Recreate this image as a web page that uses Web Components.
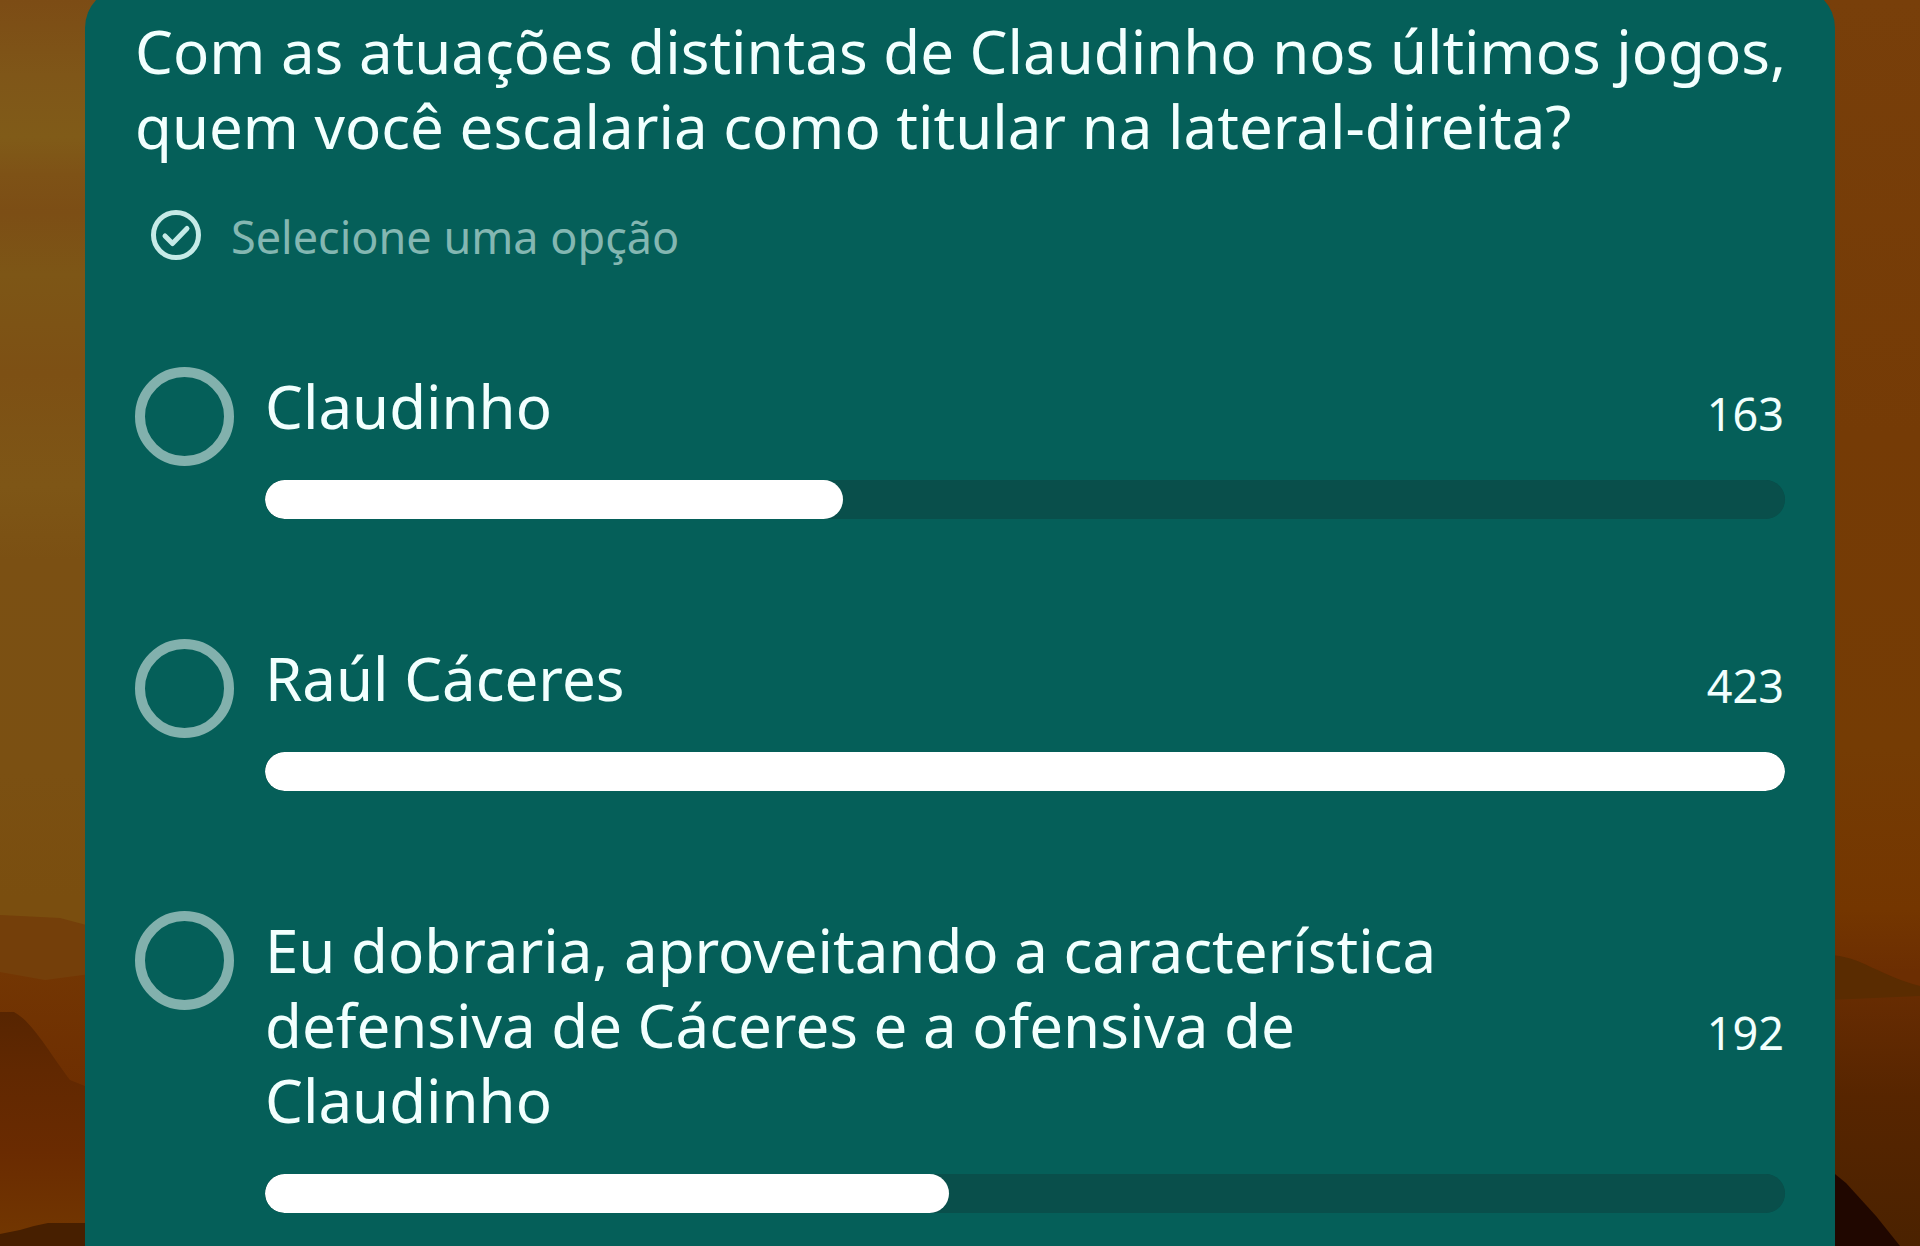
<!DOCTYPE html>
<html lang="pt-BR">
<head>
<meta charset="utf-8">
<meta name="viewport" content="width=device-width, initial-scale=1">
<title>Enquete</title>
<style>
  body { margin: 0; background: #7b4f14; font-family: "Noto Sans", "Open Sans", sans-serif; color: #f2fffe; }
</style>
</head>
<body>
<poll-stage>
  <sunset-scene slot="scene"></sunset-scene>
  <poll-card>
    <span slot="question">Com as atuações distintas de Claudinho nos últimos jogos,<br>quem você escalaria como titular na lateral-direita?</span>
    <poll-hint slot="hint">Selecione uma opção</poll-hint>
    <poll-option votes="163" share="38">Claudinho</poll-option>
    <poll-option votes="423" share="100">Raúl Cáceres</poll-option>
    <poll-option votes="192" share="45">Eu dobraria, aproveitando a característica<br>defensiva de Cáceres e a ofensiva de<br>Claudinho</poll-option>
  </poll-card>
</poll-stage>

<template id="stage-tpl">
  <style>
    :host { display: grid; grid-template: minmax(100vh, auto) / minmax(0, 1fr); overflow: hidden; }
    .scene, .content { grid-area: 1 / 1; display: grid; }
    .content { padding: 0 85px; margin-top: -13px; }
  </style>
  <div class="scene"><slot name="scene"></slot></div>
  <main class="content"><slot></slot></main>
</template>

<template id="scene-tpl">
  <style>
    :host { display: grid; contain: size; }
    svg { width: 100%; height: 100%; display: block; }
  </style>
  <svg viewBox="0 0 1920 1246" preserveAspectRatio="none" aria-hidden="true">
    <defs>
      <linearGradient id="l" x2="0" y2="1">
        <stop offset="0" stop-color="#7c4c15"/><stop offset=".06" stop-color="#7f5618"/>
        <stop offset=".11" stop-color="#805b18"/><stop offset=".14" stop-color="#7e5216"/>
        <stop offset=".17" stop-color="#7c4e15"/><stop offset=".22" stop-color="#7d5616"/>
        <stop offset=".3" stop-color="#7d5014"/><stop offset=".39" stop-color="#7e5616"/>
        <stop offset=".45" stop-color="#7b5013"/><stop offset=".62" stop-color="#7b5012"/>
        <stop offset=".72" stop-color="#7a4e0f"/>
      </linearGradient>
      <linearGradient id="r" x2="0" y2="1">
        <stop offset="0" stop-color="#783f0a"/><stop offset=".35" stop-color="#753b06"/>
        <stop offset=".6" stop-color="#753c04"/><stop offset=".73" stop-color="#743600"/>
        <stop offset=".78" stop-color="#6c2e02"/>
      </linearGradient>
      <linearGradient id="lh" x2="0" y2="1">
        <stop offset="0" stop-color="#733603"/><stop offset=".5" stop-color="#6d2d01"/><stop offset="1" stop-color="#763a02"/>
      </linearGradient>
      <linearGradient id="hill" x2="0" y2="1">
        <stop offset="0" stop-color="#572501"/><stop offset=".25" stop-color="#612801"/>
        <stop offset=".6" stop-color="#6a2b01"/><stop offset="1" stop-color="#733801"/>
      </linearGradient>
      <linearGradient id="rh" x2="0" y2="1">
        <stop offset="0" stop-color="#672c02"/><stop offset=".4" stop-color="#572500"/><stop offset="1" stop-color="#4b2200"/>
      </linearGradient>
    </defs>
    <rect width="960" height="1246" fill="url(#l)"/>
    <rect x="960" width="960" height="1246" fill="url(#r)"/>
    <path d="M0 915 L60 918 L90 926 V1246 H0Z" fill="#743f0a"/>
    <path d="M0 972 L45 980 L90 974 V1246 H0Z" fill="url(#lh)"/>
    <path d="M0 1012 L14 1012 C32 1022 45 1046 70 1080 L90 1088 V1246 H0Z" fill="url(#hill)"/>
    <path d="M0 1234 L20 1230 L34 1226 L48 1223 H90 V1246 H0Z" fill="#471f00"/>
    <path d="M1830 955 C1860 956 1880 976 1920 986 V1246 H1830Z" fill="#5a2c01"/>
    <path d="M1830 1000 L1920 996 V1246 H1830Z" fill="url(#rh)"/>
    <path d="M1830 1170 L1846 1183 L1876 1216 L1900 1246 H1830Z" fill="#200700"/>
  </svg>
</template>

<template id="card-tpl">
  <style>
    :host { display: flex; flex-direction: column; background: #055f59; border-radius: 41px 41px 0 0; padding: 27px 30px 32px 50px; }
    h1 { margin: 0 0 41px; font-size: 60px; line-height: 75px; font-weight: 400; }
    fieldset { border: 0; margin: 102px 20px 0 0; padding: 0; min-width: 0; display: flex; flex-direction: column; gap: 120px; }
  </style>
  <h1 id="q"><slot name="question"></slot></h1>
  <slot name="hint"></slot>
  <fieldset aria-labelledby="q"><slot></slot></fieldset>
</template>

<template id="hint-tpl">
  <style>
    :host { display: flex; align-items: center; gap: 30px; padding-left: 16px; font-size: 45px; line-height: 56px; color: #84b7b2; }
    svg { width: 50px; height: 50px; flex: none; }
    span { padding-top: 4px; }
  </style>
  <svg viewBox="0 0 50 50" fill="none" stroke="#c6eae7" aria-hidden="true">
    <circle cx="25" cy="25" r="22.5" stroke-width="5"/>
    <path d="M14 26 L21.5 33.5 L36 18.5" stroke-width="5" stroke-linecap="round" stroke-linejoin="round"/>
  </svg>
  <span><slot></slot></span>
</template>

<template id="option-tpl">
  <style>
    :host { display: grid; grid-template-columns: 99px minmax(0, 1fr); column-gap: 31px; }
    input { appearance: none; box-sizing: border-box; width: 99px; height: 99px; margin: 0; border: 10px solid #82b1ad; border-radius: 50%; cursor: pointer; }
    input:checked { background: radial-gradient(circle, #fff 45%, transparent 47%); }
    .body { display: flex; flex-direction: column; gap: 36px; padding-top: 2px; }
    .row { display: flex; align-items: center; justify-content: space-between; gap: 40px; }
    label { font-size: 60px; line-height: 75px; cursor: pointer; }
    output { font-size: 45px; line-height: 56px; padding: 15px 1px 0 0; }
    progress { appearance: none; display: block; width: 100%; height: 39px; border: 0; border-radius: 20px; overflow: hidden; background: #094f4b; }
    progress::-webkit-progress-bar { background: #094f4b; border-radius: 20px; }
    progress::-webkit-progress-value { background: #fff; border-radius: 20px; }
  </style>
  <input type="radio" id="choice">
  <div class="body">
    <div class="row">
      <label for="choice" id="name"><slot></slot></label>
      <output></output>
    </div>
    <progress max="100" aria-labelledby="name"></progress>
  </div>
</template>

<script>
  class TemplateElement extends HTMLElement {
    constructor() {
      super();
      this.attachShadow({ mode: "open" }).append(
        document.getElementById(this.constructor.template).content.cloneNode(true));
    }
  }
  class PollStage extends TemplateElement { static template = "stage-tpl"; }
  class SunsetScene extends TemplateElement { static template = "scene-tpl"; }
  class PollHint extends TemplateElement { static template = "hint-tpl"; }
  class PollOption extends TemplateElement {
    static template = "option-tpl";
    connectedCallback() {
      this.shadowRoot.querySelector("output").textContent = this.getAttribute("votes");
      this.shadowRoot.querySelector("progress").value = Number(this.getAttribute("share"));
      this.shadowRoot.querySelector("input").addEventListener("change", () =>
        this.dispatchEvent(new CustomEvent("choose", { bubbles: true })));
    }
    clear() { this.shadowRoot.querySelector("input").checked = false; }
  }
  class PollCard extends TemplateElement {
    static template = "card-tpl";
    connectedCallback() {
      // Radios live in separate shadow roots, so the card keeps the choice single.
      this.addEventListener("choose", (e) => {
        for (const option of this.querySelectorAll("poll-option"))
          if (option !== e.target) option.clear();
      });
    }
  }
  customElements.define("poll-stage", PollStage);
  customElements.define("sunset-scene", SunsetScene);
  customElements.define("poll-hint", PollHint);
  customElements.define("poll-option", PollOption);
  customElements.define("poll-card", PollCard);
</script>
</body>
</html>
